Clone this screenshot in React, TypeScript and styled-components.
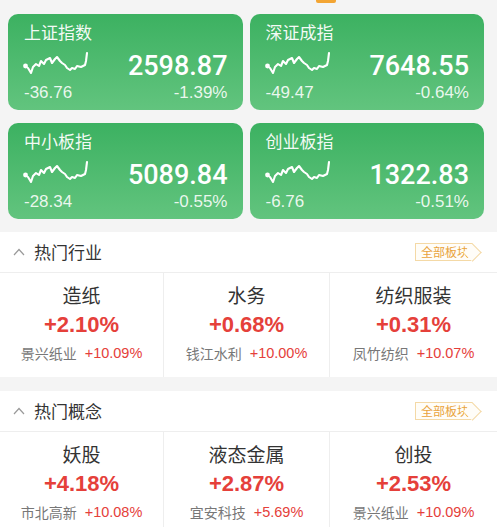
import React from "react";
import styled, { createGlobalStyle } from "styled-components";

const GlobalStyle = createGlobalStyle`
  html, body {
    margin: 0;
    padding: 0;
    overflow: hidden;
    background: #f4f4f4;
  }
  * {
    box-sizing: border-box;
  }
`;

const FONT = `"Liberation Sans", "Noto Sans CJK SC", sans-serif`;
const RED = "#e5403a";

interface IndexItem {
  name: string;
  value: string;
  change: string;
  percent: string;
}

interface SectorItem {
  name: string;
  percent: string;
  stock: string;
  stockPercent: string;
}

const indices: IndexItem[] = [
  { name: "上证指数", value: "2598.87", change: "-36.76", percent: "-1.39%" },
  { name: "深证成指", value: "7648.55", change: "-49.47", percent: "-0.64%" },
  { name: "中小板指", value: "5089.84", change: "-28.34", percent: "-0.55%" },
  { name: "创业板指", value: "1322.83", change: "-6.76", percent: "-0.51%" },
];

const industries: SectorItem[] = [
  { name: "造纸", percent: "+2.10%", stock: "景兴纸业", stockPercent: "+10.09%" },
  { name: "水务", percent: "+0.68%", stock: "钱江水利", stockPercent: "+10.00%" },
  { name: "纺织服装", percent: "+0.31%", stock: "凤竹纺织", stockPercent: "+10.07%" },
];

const concepts: SectorItem[] = [
  { name: "妖股", percent: "+4.18%", stock: "市北高新", stockPercent: "+10.08%" },
  { name: "液态金属", percent: "+2.87%", stock: "宜安科技", stockPercent: "+5.69%" },
  { name: "创投", percent: "+2.53%", stock: "景兴纸业", stockPercent: "+10.09%" },
];

const Page = styled.div`
  width: 497px;
  min-height: 527px;
  background: #f4f4f4;
  font-family: ${FONT};
`;

const TabStrip = styled.div`
  height: 3px;
  padding-left: 316px;
`;

const TabIndicator = styled.div`
  width: 20px;
  height: 3px;
  background: #f3a533;
  border-radius: 0 0 2px 2px;
`;

const IndexGrid = styled.div`
  display: grid;
  grid-template-columns: 1fr 1fr;
  gap: 13px 7px;
  padding: 11px 13px 0 8px;
`;

const IndexCard = styled.div`
  height: 96px;
  border-radius: 10px;
  padding: 8px 15px 6px 16px;
  color: #fff;
  background: linear-gradient(180deg, #3cb161 0%, #62c47e 100%);
  display: flex;
  flex-direction: column;
`;

const CardTitle = styled.div`
  font-size: 17px;
  line-height: 24px;
  color: rgba(255, 255, 255, 0.95);
`;

const CardMiddle = styled.div`
  height: 36px;
  display: flex;
  align-items: center;
  justify-content: space-between;
`;

const CardValue = styled.div`
  font-family: Roboto, "Liberation Sans", sans-serif;
  font-size: 27px;
  line-height: 30px;
  margin-top: 4px;
  font-weight: 500;
`;

const CardBottom = styled.div`
  display: flex;
  justify-content: space-between;
  font-size: 17px;
  line-height: 22px;
  color: rgba(255, 255, 255, 0.88);
`;

const Section = styled.div<{ $gap: number }>`
  margin-top: ${(p) => p.$gap}px;
  background: #fff;
`;

const SectionHeader = styled.div`
  height: 41px;
  display: flex;
  align-items: center;
  padding: 0 15px 1px 13px;
  border-bottom: 1px solid #eeeeee;
`;

const SectionTitle = styled.div`
  flex: 1;
  margin-left: 9px;
  font-size: 17px;
  color: #333;
`;

const Badge = styled.div`
  position: relative;
  height: 18px;
  display: inline-flex;
  align-items: center;
  padding: 0 4px 0 5px;
  margin-right: 9px;
  border: 1px solid #f4d9a6;
  border-right: none;
  font-size: 12px;
  color: #e9a33c;
  background: #fffdf8;

  &::after {
    content: "";
    position: absolute;
    top: 2px;
    right: -6px;
    width: 12px;
    height: 12px;
    border-top: 1px solid #f4d9a6;
    border-right: 1px solid #f4d9a6;
    background: #fffdf8;
    transform: rotate(45deg);
  }
`;

const SectorGrid = styled.div`
  display: grid;
  grid-template-columns: 163px 166px 1fr;
`;

const SectorCell = styled.div<{ $divider: boolean }>`
  display: flex;
  flex-direction: column;
  align-items: center;
  padding: 10px 0;
  border-left: ${(p) => (p.$divider ? "1px solid #eeeeee" : "none")};
`;

const SectorName = styled.div`
  font-size: 19px;
  line-height: 28px;
  color: #333;
`;

const SectorPercent = styled.div`
  font-size: 22px;
  line-height: 28px;
  font-weight: 700;
  color: ${RED};
`;

const StockRow = styled.div`
  display: flex;
  align-items: center;
  gap: 8px;
  height: 28px;
`;

const StockName = styled.span`
  font-size: 14px;
  color: #777;
`;

const StockPercent = styled.span`
  font-size: 14.5px;
  color: ${RED};
`;

const Sparkline = () => (
  <svg width="64" height="24" viewBox="0 0 64 22" style={{ overflow: "visible" }}>
    <polyline
      points="1,13 4,15 7,20 9,14 12,11 15,13 17,8 20,11 22,7 26,5 28,10 31,6 33,4 36,8 38,10 41,12 43,15 46,17 48,15 51,16 53,13 57,14 61,12 62,8 63,0"
      fill="none"
      stroke="#fff"
      strokeWidth="2.1"
      strokeLinejoin="round"
      strokeLinecap="round"
    />
    <circle cx="1.5" cy="13" r="2.4" fill="#fff" />
  </svg>
);

const ChevronUp = () => (
  <svg width="12" height="8" viewBox="0 0 12 8">
    <polyline points="1,7 6,1.5 11,7" fill="none" stroke="#9a9a9a" strokeWidth="1.2" />
  </svg>
);

const SectorBlock: React.FC<{ title: string; items: SectorItem[]; gap: number }> = ({
  title,
  items,
  gap,
}) => (
  <Section $gap={gap}>
    <SectionHeader>
      <ChevronUp />
      <SectionTitle>{title}</SectionTitle>
      <Badge>全部板块</Badge>
    </SectionHeader>
    <SectorGrid>
      {items.map((item, i) => (
        <SectorCell key={item.name} $divider={i > 0}>
          <SectorName>{item.name}</SectorName>
          <SectorPercent>{item.percent}</SectorPercent>
          <StockRow>
            <StockName>{item.stock}</StockName>
            <StockPercent>{item.stockPercent}</StockPercent>
          </StockRow>
        </SectorCell>
      ))}
    </SectorGrid>
  </Section>
);

export default function App() {
  return (
    <Page>
      <GlobalStyle />
      <TabStrip>
        <TabIndicator />
      </TabStrip>
      <IndexGrid>
        {indices.map((idx) => (
          <IndexCard key={idx.name}>
            <CardTitle>{idx.name}</CardTitle>
            <CardMiddle>
              <Sparkline />
              <CardValue>{idx.value}</CardValue>
            </CardMiddle>
            <CardBottom>
              <span>{idx.change}</span>
              <span>{idx.percent}</span>
            </CardBottom>
          </IndexCard>
        ))}
      </IndexGrid>
      <SectorBlock title="热门行业" items={industries} gap={13} />
      <SectorBlock title="热门概念" items={concepts} gap={14} />
    </Page>
  );
}
